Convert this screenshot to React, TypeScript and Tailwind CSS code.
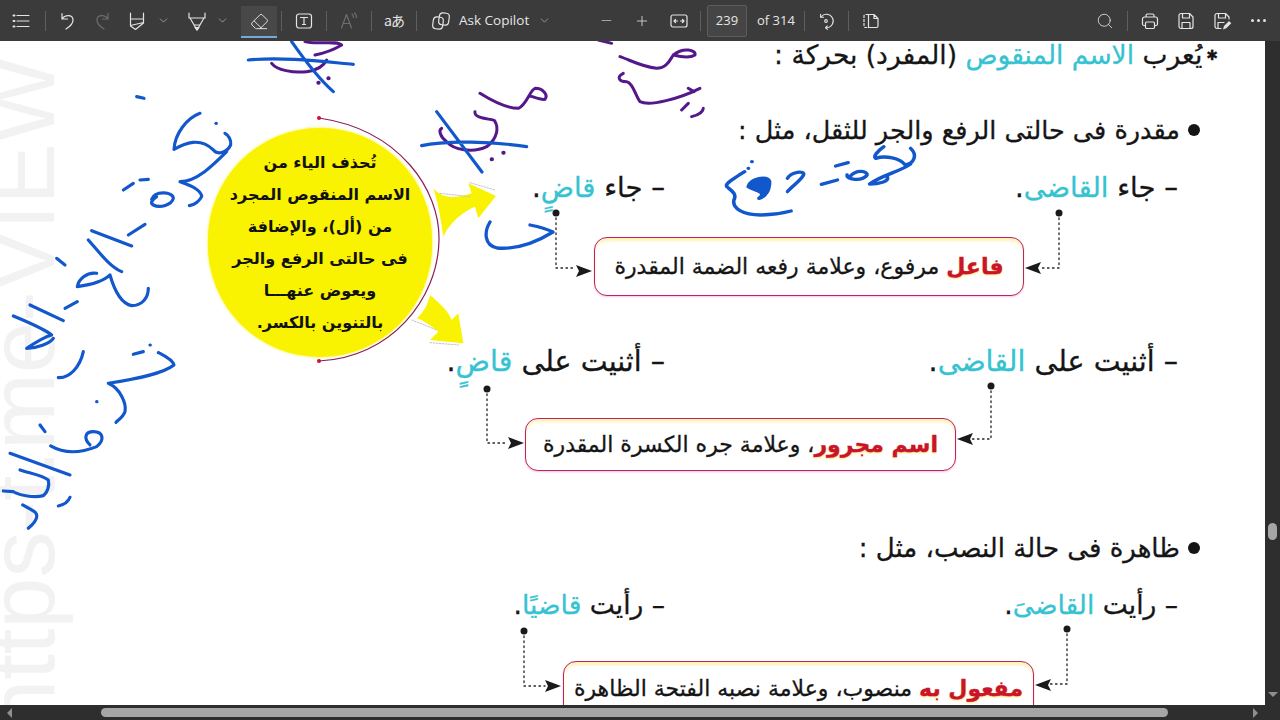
import { ChevronDown, Eraser, Minus, Plus, Search } from "lucide-react";

const teal = "text-[#35c3d2]";
const red = "text-[#c8142f] [text-shadow:0_1px_2px_#ffd84d]";

function Sep() {
  return <div className="h-[20px] w-px bg-[#5f5f5f]" />;
}

function Slot({ w, children }: { w: string; children?: React.ReactNode }) {
  return <div className={`flex h-full shrink-0 items-center justify-center ${w}`}>{children}</div>;
}

function Ico({ w = 20, h = 20, dim, children }: { w?: number; h?: number; dim?: boolean; children: React.ReactNode }) {
  return (
    <svg width={w} height={h} viewBox={`0 0 ${w} ${h}`} fill="none" stroke={dim ? "#6e6e6e" : "#e4e4e4"} strokeWidth="1.2" strokeLinecap="round" strokeLinejoin="round">
      {children}
    </svg>
  );
}

function Chev() {
  return <ChevronDown size={13} strokeWidth={1.2} className="text-[#c4c4c4]" />;
}

function Toolbar() {
  return (
    <div className="flex h-[41px] shrink-0 items-center bg-[#3b3b3b] pl-[4px] pr-[4px] text-[#e6e6e6] font-['Open_Sans',sans-serif] text-[13px]">
      <Slot w="w-[36px]">
        <Ico>
          <path d="M5 4.500h12M5 10h12M5 15.500h12" />
          <path d="M1.500 4.500h1M1.500 10h1M1.500 15.500h1" strokeWidth="2" />
        </Ico>
      </Slot>
      <Slot w="w-[10px]"><Sep /></Slot>
      <Slot w="w-[34px]">
        <Ico>
          <path d="M5 2.500V8h5.500M5 8c3-4.500 10.500-4.500 11 .5.300 3.500-3 7-7 9.500" />
        </Ico>
      </Slot>
      <Slot w="w-[38px]">
        <Ico dim>
          <path d="M15 2.500V8H9.500M15 8c-3-4.500-10.500-4.500-11 .5-.3 3.500 3 7 7 9.500" />
        </Ico>
      </Slot>
      <Slot w="w-[30px]">
        <Ico w={16}>
          <path d="M1.500 2v6h13V2M1.500 8v7l5 3.500 8-6.500V8M1.500 14.500l13-3" />
        </Ico>
      </Slot>
      <Slot w="w-[22px]"><Chev /></Slot>
      <div className="w-[6px]" />
      <Slot w="w-[34px]">
        <Ico>
          <path d="M2 2v5h16V2M3 7l7 12 7-12M7 14h6" />
          <path d="M8 16.500h4L10 19z" fill="#e4e4e4" />
        </Ico>
      </Slot>
      <Slot w="w-[16px]"><Chev /></Slot>
      <div className="w-[11px]" />
      <div className="mb-[3px] flex h-[32px] w-[36px] shrink-0 items-center justify-center self-end border-b-2 border-[#74a9d8] bg-[#484848]">
        <Eraser size={19} strokeWidth={1.2} />
      </div>
      <Slot w="w-[8px]"><Sep /></Slot>
      <Slot w="w-[38px]">
        <Ico>
          <rect x="2.500" y="3" width="15" height="14" rx="2.500" />
          <path d="M6.500 6.500h7M10 6.500v7M8.500 13.500h3" />
        </Ico>
      </Slot>
      <Slot w="w-[6px]"><Sep /></Slot>
      <Slot w="w-[40px]">
        <Ico dim>
          <path d="M2.500 17 7.500 3.500 12.500 17M4.300 12.500h6.400" />
          <path d="M13 3c1 .8 1.500 2 1.500 3.500M15.500 2c1.300 1.200 2 2.700 2 4.500" />
        </Ico>
      </Slot>
      <Slot w="w-[4px]"><Sep /></Slot>
      <Slot w="w-[42px]">
        <span className="font-['Noto_Sans_CJK_JP',sans-serif] text-[14px] tracking-[-1px]">aあ</span>
      </Slot>
      <Slot w="w-[2px]"><Sep /></Slot>
      <div className="w-[10px]" />
      <Slot w="w-[28px]">
        <Ico>
          <rect x="2" y="6" width="10" height="12" rx="3.500" transform="rotate(8 7 12)" />
          <rect x="8" y="2" width="10" height="12" rx="3.500" transform="rotate(8 13 8)" />
        </Ico>
      </Slot>
      <div className="ml-[4px] w-[71px] shrink-0 whitespace-nowrap text-[13.500px]">Ask Copilot</div>
      <Slot w="w-[28px]"><Chev /></Slot>
      <div className="w-[30px]" />
      <Slot w="w-[36px]"><Minus size={15} strokeWidth={1.3} className="text-[#bdbdbd]" /></Slot>
      <Slot w="w-[36px]"><Plus size={16} strokeWidth={1.2} /></Slot>
      <Slot w="w-[38px]">
        <Ico>
          <rect x="2" y="4" width="16" height="12" rx="2" />
          <path d="M5 10h3.500M11.500 10H15M6.500 8.500 5 10l1.500 1.500M13.500 8.500 15 10l-1.500 1.500" />
        </Ico>
      </Slot>
      <Slot w="w-[4px]"><Sep /></Slot>
      <div className="ml-[5px] flex h-[32px] w-[40px] shrink-0 items-center justify-center rounded-[2px] border border-[#5d5d5d] bg-[#454545]">239</div>
      <div className="ml-[10px] w-[34px] shrink-0 whitespace-nowrap">of 314</div>
      <Slot w="w-[26px]"><Sep /></Slot>
      <Slot w="w-[18px]">
        <Ico>
          <path d="M4.500 5.500A7.500 7.500 0 1 1 10.500 17.500" />
          <path d="M4 2.500v3.300h3.300M11.500 15.500l-2 2 2 1.800" />
          <circle cx="10" cy="10" r="1.500" />
        </Ico>
      </Slot>
      <Slot w="w-[26px]"><Sep /></Slot>
      <Slot w="w-[20px]">
        <Ico>
          <path d="M7 3.500H4.500a1.500 1.500 0 0 0-1.500 1.500v10a1.500 1.500 0 0 0 1.500 1.500H7" strokeDasharray="2 2" />
          <path d="M7.500 3.500h5.500l4 4v7.500a1.500 1.500 0 0 1-1.500 1.500h-8zM13 3.500v4h4" />
        </Ico>
      </Slot>
      <div className="flex-1" />
      <Slot w="w-[34px]"><Search size={18} strokeWidth={1.1} /></Slot>
      <Slot w="w-[10px]"><Sep /></Slot>
      <Slot w="w-[36px]">
        <Ico>
          <path d="M6 6V4.500A1.500 1.500 0 0 1 7.500 3h5A1.500 1.500 0 0 1 14 4.500V6M5.500 14.500H4A1.500 1.500 0 0 1 2.500 13V8A2 2 0 0 1 4.500 6h11a2 2 0 0 1 2 2v5a1.500 1.500 0 0 1-1.500 1.500h-1.500" />
          <rect x="5.500" y="11" width="9" height="6.500" rx="1.200" />
        </Ico>
      </Slot>
      <Slot w="w-[36px]">
        <Ico>
          <path d="M5 2.500h8.500L17 6v9.500a2 2 0 0 1-2 2H5a2 2 0 0 1-2-2v-11a2 2 0 0 1 2-2z" />
          <path d="M6.500 2.500V7h7V2.500M6 17.500V11.500h8v6" />
        </Ico>
      </Slot>
      <Slot w="w-[36px]">
        <Ico>
          <path d="M9 17.500H5a2 2 0 0 1-2-2v-11a2 2 0 0 1 2-2h8.500L17 6v2" />
          <path d="M6.500 2.500V7h7V2.500M6 17V11.500h6" />
          <path d="M11 18.500l1-3.500 5-5 2.300 2.300-5 5z" fill="#e4e4e4" stroke="none" />
        </Ico>
      </Slot>
      <Slot w="w-[36px]">
        <div className="flex gap-[3px]">
          <div className="h-[3px] w-[3px] rounded-full bg-[#e4e4e4]" />
          <div className="h-[3px] w-[3px] rounded-full bg-[#e4e4e4]" />
          <div className="h-[3px] w-[3px] rounded-full bg-[#e4e4e4]" />
        </div>
      </Slot>
    </div>
  );
}

// hand-written pen strokes and the page's connector lines, in screen coordinates
function Overlay() {
  return (
    <svg className="pointer-events-none absolute left-0 top-0 h-[664px] w-[1265px]" viewBox="0 41 1265 664" fill="none" strokeLinecap="round" strokeLinejoin="round">
      {/* yellow arrows and arc of the circle */}
      <g transform="translate(180 90) scale(.3333)">
        <path fill="#f9f200" d="M760 295C790 330 830 325 875 310L865 280 948 318 895 385 885 350C850 365 810 395 790 440 785 400 775 340 760 295Z" />
        <path fill="#f9f200" d="M750 615C780 640 810 670 815 690L835 670 850 760 750 750 775 725C755 710 730 690 710 685 730 670 745 640 750 615Z" />
        <g stroke="#c4c4c4" strokeWidth="3" strokeDasharray="5 4">
          <path d="M870 278 945 300M780 310 870 320M695 690 770 720M750 758 835 765" />
        </g>
      </g>
      <path d="M319 118C400 130 440 190 439 240 438 300 390 358 319 361" stroke="#8b1d5e" strokeWidth="1.200" />
      <circle cx="319" cy="118" r="2" fill="#c8142f" />
      <circle cx="319" cy="361" r="2" fill="#c8142f" />

      {/* connectors */}
      <g stroke="#222" strokeWidth="1.300" strokeDasharray="1.500 3.500">
        <path d="M1059 213V268H1040M556 213V268H576M991 386V439H972M487 389V443H508M1067 629V684H1050M524 631V686H545" />
      </g>
      <g fill="#1a1a1a">
        <circle cx="1059" cy="213" r="3.500" />
        <circle cx="556" cy="213" r="3.500" />
        <circle cx="991" cy="386" r="3.500" />
        <circle cx="487" cy="389" r="3.500" />
        <circle cx="1067" cy="629" r="3.500" />
        <circle cx="524" cy="631" r="3.500" />
        <path d="M1025 268l16-6-3 6 3 6zM592 271l-16-6 3 6-3 6zM957 439l16-6-3 6 3 6zM524 443l-16-6 3 6-3 6zM1035 685l16-6-3 6 3 6zM561 686l-16-6 3 6-3 6z" />
      </g>

      {/* blue pen, left margin */}
      <g transform="translate(0 40) scale(.3333)" stroke="#1257cc" strokeWidth="9.500">
        <path d="M410 170 432 175" />
        <path d="M600 220C560 235 525 280 522 328 555 310 600 290 640 330 650 345 680 340 692 315 695 300 685 285 675 280" />
        <path d="M680 335C640 375 590 425 540 425 570 435 605 450 605 470 600 480 585 495 568 497" />
        <path d="M648 250h1" />
        <path d="M455 478C465 450 520 455 520 475 515 495 480 505 460 495 450 490 455 480 470 470" />
        <path d="M370 450 400 430M420 420 445 418M385 585 435 553" />
        <path d="M275 572 395 618M265 600C300 640 330 680 365 695" />
        <path d="M290 700C260 695 235 720 232 740 270 735 310 725 330 705 340 740 360 790 395 797 425 797 445 775 445 745" />
        <path d="M170 655 195 675M195 805 232 785" />
        <path d="M90 795 190 842M40 828C80 845 130 865 155 885 135 890 95 915 80 925 110 925 150 910 160 895" />
        <path d="M175 1013C210 1015 240 980 250 935" />
        <path d="M400 943 430 935M475 938h1M450 915h1M290 1085h1" />
        <path d="M480 940C500 950 520 965 522 975 490 1000 420 1015 325 1030 360 1045 380 1090 375 1115 370 1130 355 1140 348 1147" />
        <path d="M120 1155 135 1175" />
        <path d="M152 1218C190 1240 240 1240 290 1220 315 1200 310 1175 280 1175 255 1175 250 1195 270 1215" />
        <path d="M30 1240 210 1305M60 1290C90 1300 125 1305 145 1320 150 1340 140 1360 130 1367 100 1375 60 1365 45 1358M10 1353 40 1355" />
        <path d="M68 1395 95 1410C118 1420 115 1440 85 1465M175 1398C190 1395 205 1385 210 1372" />
      </g>

      {/* purple pen, top */}
      <g transform="translate(240 40) scale(.3333)" stroke="#54188a" strokeWidth="9">
        <path d="M195 5C230 15 290 0 305 15 280 30 250 40 225 45M95 70C110 90 160 100 200 95 240 90 255 70 260 60" />
        <path d="M235 128h1M265 115h1" strokeWidth="12" />
        <path d="M720 160C760 185 800 205 835 205 860 195 870 150 885 145 910 145 925 165 915 178 900 180 880 170 870 168" />
        <path d="M705 215C700 240 770 235 765 245 775 260 775 295 740 320 700 340 640 330 620 305 600 290 595 270 605 265" />
        <path d="M755 358h1M790 338h1" strokeWidth="12" />
        <path d="M1140 50C1170 60 1205 80 1250 85 1280 85 1290 60 1300 45 1330 20 1370 30 1365 45 1350 55 1320 50 1300 45" />
        <path d="M1150 100C1130 110 1135 125 1160 125 1180 130 1185 165 1200 185 1230 200 1320 175 1380 145" />
        <path d="M1345 145 1362 155M1325 210 1345 190M1355 230C1375 225 1390 215 1390 205M1075 0 1115 10" />
      </g>
      <g transform="translate(240 40) scale(.3333)" stroke="#1257cc" strokeWidth="9.500">
        <path d="M25 60C130 50 250 65 340 73M155 5C190 55 240 120 280 155" />
        <path d="M590 215 726 396M545 317C620 300 760 305 860 320" />
      </g>

      {/* blue pen near the first example */}
      <path d="M490 222C484 232 484 245 497 248 520 250 540 240 553 232 545 228 535 226 530 225" stroke="#1257cc" strokeWidth="3.300" />
      <g transform="translate(700 40) scale(.357 .3333)" stroke="#1257cc" strokeWidth="10">
        <path d="M515 320C495 335 485 350 492 355 520 345 560 355 575 375 600 370 610 345 590 325M590 372C560 395 510 405 475 432 500 432 530 425 525 410" />
        <path d="M420 410C440 385 470 395 468 405 455 425 410 420 412 405" />
        <path d="M380 378 415 368M340 433 385 420" />
        <path d="M245 415C255 395 295 390 290 405 280 425 255 440 245 455" />
        <path d="M135 440C140 415 190 405 195 425 195 450 185 470 165 475 190 455 150 450 135 440Z" fill="#1257cc" />
        <path d="M145 365h1M135 385h1" />
        <path d="M125 395 110 405C90 420 70 430 75 440 85 450 105 460 95 480 90 505 120 525 170 525 200 525 230 520 255 513" />
      </g>
    </svg>
  );
}

function Example({ right, rightName, left, leftName, className }: { right: string; rightName: string; left: string; leftName: string; className: string }) {
  return (
    <div className={`grid h-[36px] grid-cols-[217px_513px] items-center justify-end pr-[87px] leading-[36px] ${className}`}>
      <p dir="rtl" className="whitespace-nowrap text-right">
        – {left} <span className={teal}>{leftName}</span>.
      </p>
      <p dir="rtl" className="whitespace-nowrap text-right">
        – {right} <span className={teal}>{rightName}</span>.
      </p>
    </div>
  );
}

function NoteBox({ className, label, rest }: { className: string; label: string; rest: string }) {
  return (
    <div
      dir="rtl"
      className={`flex shrink-0 justify-center rounded-[13px] border-[1.5px] border-[#b8236a] bg-white text-[22px] shadow-[inset_0_3px_3px_#fff2b3,0_1px_2px_#f7c6d8] ${className}`}
    >
      <p className="whitespace-nowrap">
        <span className={`font-bold ${red}`}>{label}</span>
        {rest}
      </p>
    </div>
  );
}

function Circle() {
  return (
    <div dir="rtl" className="ml-[208px] mt-[87px] flex h-[229px] w-[224px] flex-col items-center justify-center rounded-full bg-[#f9f200] text-center text-[16px] font-bold leading-[32px] text-[#111] shadow-[0_0_3px_#f9f200] [-webkit-text-stroke:0px]">
      <p>تُحذف الياء من</p>
      <p>الاسم المنقوص المجرد</p>
      <p>من (أل)، والإضافة</p>
      <p>فى حالتى الرفع والجر</p>
      <p>ويعوض عنهـــا</p>
      <p>بالتنوين بالكسر.</p>
    </div>
  );
}

function Page() {
  return (
    <div className="relative flex flex-1 overflow-hidden bg-white font-['DejaVu_Sans',sans-serif] text-[25.500px] text-[#151515] [-webkit-text-stroke:0.3px]">
      <span className="pointer-events-none absolute bottom-[-26px] left-[68px] origin-bottom-left -rotate-90 whitespace-nowrap font-['Liberation_Sans',sans-serif] text-[92px] leading-none text-[#f2f2f2] [-webkit-text-stroke:0px]">
        https-t.me-VIEW
      </span>
      <div className="relative w-[448px] shrink-0">
        <Circle />
      </div>
      <div className="relative -mt-[4px] flex-1">
        <div dir="rtl" className="flex h-[36px] items-center whitespace-nowrap pr-[47px] text-[26.500px] leading-[36px]">
          <span className="ml-[4px] text-[14px] font-bold">✱</span>
          <p>
            يُعرب <span className={teal}>الاسم المنقوص</span> (المفرد) بحركة :
          </p>
        </div>
        <div dir="rtl" className="mt-[39px] flex h-[36px] items-center whitespace-nowrap pr-[65px] leading-[36px]">
          <div className="ml-[8px] h-[12px] w-[12px] shrink-0 rounded-full bg-[#151515]" />
          <p>مقدرة فى حالتى الرفع والجر للثقل، مثل :</p>
        </div>
        <Example className="mt-[21px] text-[27.500px]" right="جاء" rightName="القاضى" left="جاء" leftName="قاضٍ" />
        <div className="mt-[32px] flex justify-end pr-[241px]">
          <NoteBox className="h-[59px] w-[430px] items-center" label="فاعل" rest=" مرفوع، وعلامة رفعه الضمة المقدرة" />
        </div>
        <Example className="mt-[48px] text-[28.500px]" right="أثنيت على" rightName="القاضى" left="أثنيت على" leftName="قاضٍ" />
        <div className="mt-[38px] flex justify-end pr-[309px]">
          <NoteBox className="h-[53px] w-[431px] items-center" label="اسم مجرور" rest="، وعلامة جره الكسرة المقدرة" />
        </div>
        <div dir="rtl" className="mt-[59px] flex h-[36px] items-center whitespace-nowrap pr-[65px] text-[26px] leading-[36px]">
          <div className="ml-[8px] h-[12px] w-[12px] shrink-0 rounded-full bg-[#151515]" />
          <p>ظاهرة فى حالة النصب، مثل :</p>
        </div>
        <Example className="mt-[21px] text-[26.500px]" right="رأيت" rightName="القاضىَ" left="رأيت" leftName="قاضيًا" />
        <div className="mt-[38px] flex justify-end pr-[231px]">
          <NoteBox className="h-[60px] w-[471px] items-start pt-[10px]" label="مفعول به" rest="  منصوب، وعلامة نصبه الفتحة الظاهرة" />
        </div>
      </div>
      <Overlay />
    </div>
  );
}

export default function App() {
  return (
    <div className="flex h-[720px] w-[1280px] flex-col overflow-hidden bg-[#2e2e2e]">
      <Toolbar />
      <div className="flex h-[664px] shrink-0">
        <Page />
        <div className="flex w-[15px] shrink-0 flex-col items-center bg-[#2e2e2e]">
          <div className="mt-[482px] h-[17px] w-[9px] rounded-full bg-[#a6a6a6]" />
          <div className="mb-[8px] mt-auto h-0 w-0 border-x-[5px] border-t-[5px] border-x-transparent border-t-[#8f8f8f]" />
        </div>
      </div>
      <div className="flex h-[15px] shrink-0 items-center">
        <div className="ml-[7px] h-0 w-0 border-y-[5px] border-r-[5px] border-y-transparent border-r-[#8f8f8f]" />
        <div className="ml-[89px] h-[9px] w-[1067px] rounded-full bg-[#a6a6a6]" />
        <div className="ml-[85px] h-0 w-0 border-y-[5px] border-l-[5px] border-y-transparent border-l-[#8f8f8f]" />
      </div>
    </div>
  );
}
